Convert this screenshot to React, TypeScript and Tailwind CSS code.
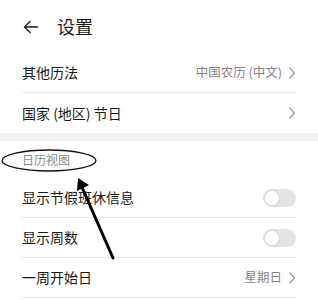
const font = { fontFamily: '"Noto Sans CJK SC", "Noto Sans", sans-serif' };

const Chevron = () => (
  <svg width="8" height="14" viewBox="0 0 8 14" className="ml-[6px]">
    <path d="M1.5 1.5 L6.5 7 L1.5 12.5" fill="none" stroke="#9a9a9a" strokeWidth="1.2" />
  </svg>
);

const Toggle = () => (
  <div className="w-[33px] h-[18px] rounded-full bg-[#e3e3e3] flex items-center px-[1px]">
    <div className="w-[16px] h-[16px] rounded-full bg-white border border-[#d6d6d6]" />
  </div>
);

type RowProps = {
  label: string;
  value?: string;
  chevron?: boolean;
  toggle?: boolean;
  border?: boolean;
};

const Row = ({ label, value, chevron, toggle, border = true }: RowProps) => (
  <div className={`flex items-center justify-between h-[40px] ${border ? "border-b border-[#e9e9e9]" : ""}`}>
    <span className="text-[14px] text-[#1a1a1a]">{label}</span>
    <div className="flex items-center">
      {value && <span className="text-[12.5px] text-[#858585]">{value}</span>}
      {chevron && <Chevron />}
      {toggle && <Toggle />}
    </div>
  </div>
);

export default function App() {
  return (
    <div className="relative w-[318px] h-[300px] bg-white overflow-hidden" style={font}>
      <div className="flex items-center h-[53px] px-[23px]">
        <svg width="16" height="14" viewBox="0 0 16 14">
          <path d="M15 7 H1.5 M7.5 1 L1.5 7 L7.5 13" fill="none" stroke="#1a1a1a" strokeWidth="1.3" />
        </svg>
        <span className="ml-[18px] text-[18px] text-[#1a1a1a]">设置</span>
      </div>
      <div className="px-[22px]">
        <Row label="其他历法" value="中国农历 (中文)" chevron />
        <Row label="国家 (地区) 节日" chevron border={false} />
      </div>
      <div className="h-[8px] bg-[#f2f2f2]" />
      <div className="px-[22px]">
        <div className="h-[37px] flex items-center">
          <span className="text-[12px] text-[#8a8a8a]">日历视图</span>
        </div>
        <Row label="显示节假班休信息" toggle />
        <Row label="显示周数" toggle />
        <Row label="一周开始日" value="星期日" chevron />
      </div>
      <svg className="absolute left-0 top-0 pointer-events-none" width="318" height="300">
        <ellipse cx="49" cy="160.5" rx="47" ry="10.5" fill="none" stroke="#111" strokeWidth="1.3" />
        <line x1="113" y1="258" x2="81" y2="185" stroke="#000" strokeWidth="3" strokeLinecap="round" />
        <polygon points="78,178 77,191 89,185" fill="#000" />
      </svg>
    </div>
  );
}
